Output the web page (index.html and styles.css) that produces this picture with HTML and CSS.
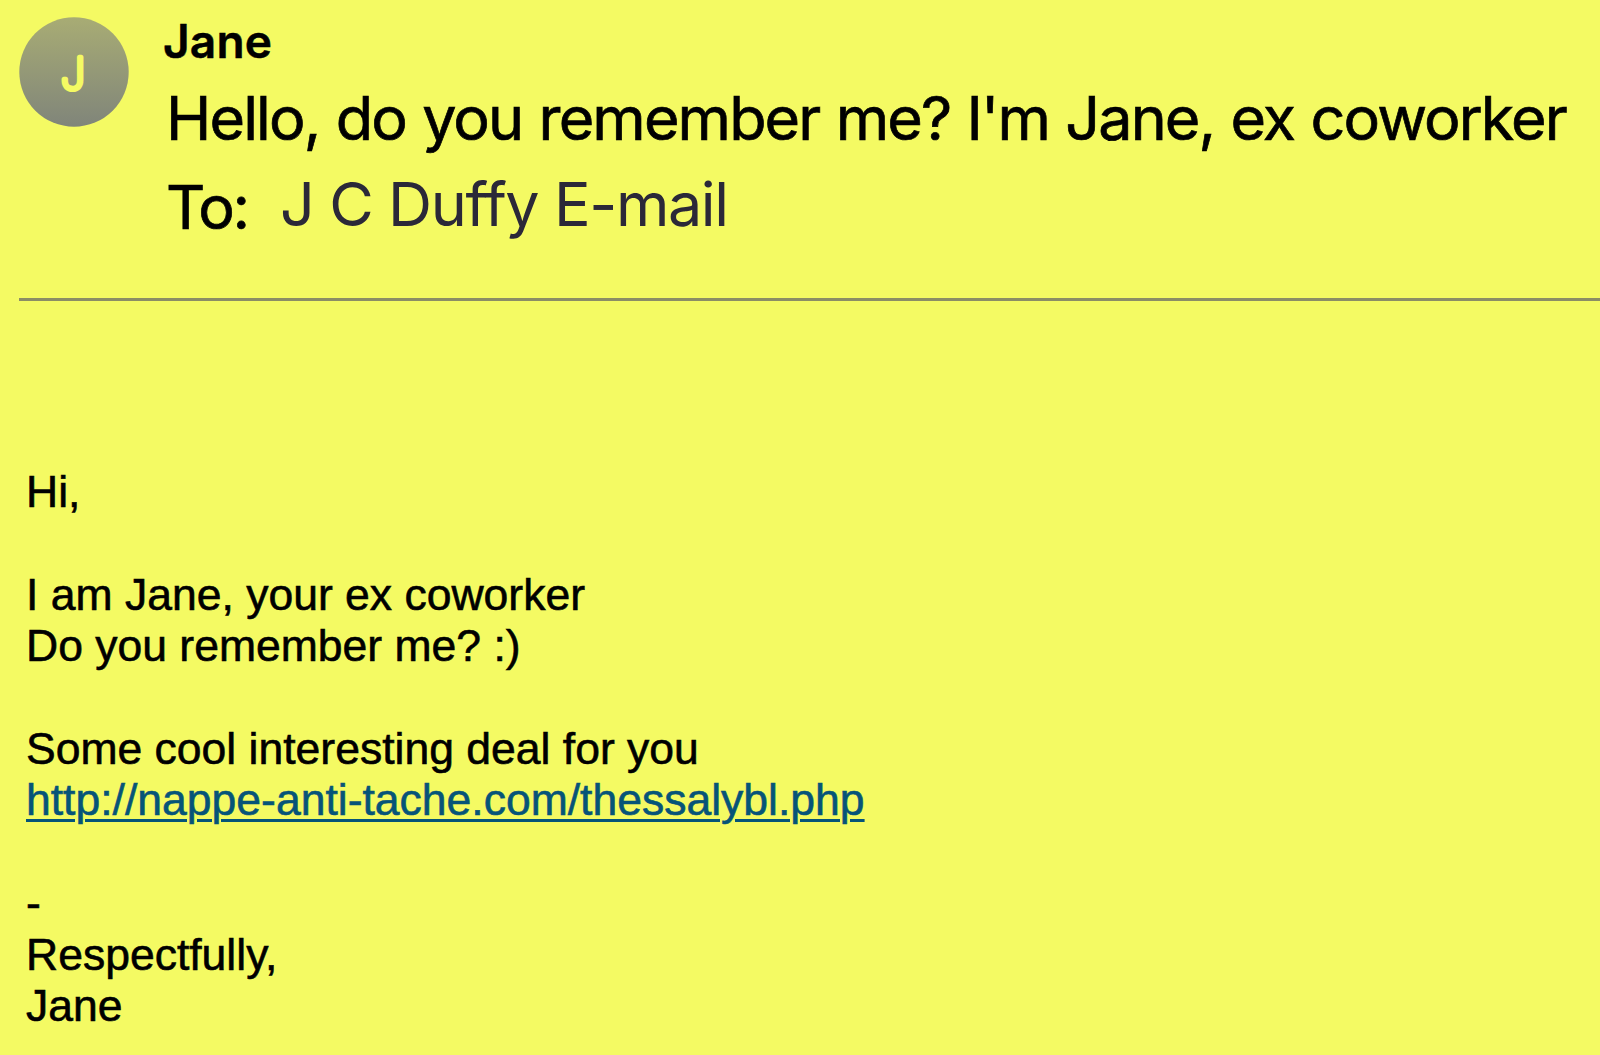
FILE: index.html
```html
<!DOCTYPE html>
<html lang="en">
<head>
  <meta charset="UTF-8">
  <title>Hello, do you remember me?</title>
  <link rel="stylesheet" href="styles.css">
</head>
<body>
  <header class="mail-header">
    <svg class="avatar" viewBox="0 0 110 110">
      <defs>
        <linearGradient id="avatar-bg" x1="0" y1="0" x2="0" y2="1">
          <stop offset="0" stop-color="#a8ac74"/>
          <stop offset="1" stop-color="#80857a"/>
        </linearGradient>
      </defs>
      <circle cx="55" cy="55" r="54.7" fill="url(#avatar-bg)"/>
      <text class="initial" x="54" y="71.5" text-anchor="middle">J</text>
    </svg>
    <div class="details">
      <div class="sender">Jane</div>
      <h1 class="subject">Hello, do you remember me? I'm Jane, ex coworker</h1>
      <div class="recipient">
        <span class="label">To:</span>
        <span class="name">J C Duffy E-mail</span>
      </div>
    </div>
  </header>
  <hr class="line">
  <main class="message">
    <p>Hi,</p>
    <p>I am Jane, your ex coworker<br>Do you remember me? :)</p>
    <p>Some cool interesting deal for you<br><a href="http://nappe-anti-tache.com/thessalybl.php">http://nappe-anti-tache.com/thessalybl.php</a></p>
    <p>-<br>Respectfully,<br>Jane</p>
  </main>
</body>
</html>
```
FILE: styles.css
```css
body {
  margin: 0;
  height: 1055px;
  overflow: hidden;
  background: #f4fa63;
  color: #000;
  font-family: "Liberation Sans", Arial, sans-serif;
}
.mail-header {
  display: flex;
  height: 298px;
  padding-left: 19px;
  box-sizing: border-box;
  font-family: Inter, sans-serif;
}
.avatar {
  flex: none;
  width: 110px;
  height: 110px;
  margin-top: 17px;
}
.initial {
  font-size: 43.5px;
  font-weight: 200;
  fill: #f4fa63;
  stroke: #f4fa63;
  stroke-width: 4.4px;
  stroke-linejoin: round;
}
.details {
  padding-left: 34px;
  white-space: nowrap;
}
.sender {
  margin-top: 11px;
  font-size: 46px;
  font-weight: 600;
  line-height: 60px;
  letter-spacing: 0.2px;
  -webkit-text-stroke: 0.5px;
}
.subject {
  margin: 7px 0 0 3px;
  font-size: 61px;
  font-weight: 400;
  line-height: 80px;
  letter-spacing: -1.87px;
  word-spacing: 1px;
  -webkit-text-stroke: 0.7px;
}
.recipient {
  display: flex;
  margin: 4px 0 0 3px;
  font-size: 61px;
  line-height: 84px;
}
.label {
  width: 114px;
  padding-top: 3px;
  letter-spacing: -2.3px;
  -webkit-text-stroke: 0.7px;
}
.name {
  color: #2b2838;
  letter-spacing: -1.4px;
  font-feature-settings: "liga" 0, "calt" 0;
}
.line {
  height: 3px;
  margin: 0 0 0 19px;
  border: none;
  background: #8b8d65;
}
.message {
  padding: 165px 0 0 26px;
  font-size: 44.5px;
  line-height: 51.4px;
  -webkit-text-stroke: 0.6px;
}
.message p {
  margin: 0 0 51.4px;
}
.message a {
  color: #065478;
  text-decoration-thickness: 3px;
  text-underline-offset: 4px;
}
```
